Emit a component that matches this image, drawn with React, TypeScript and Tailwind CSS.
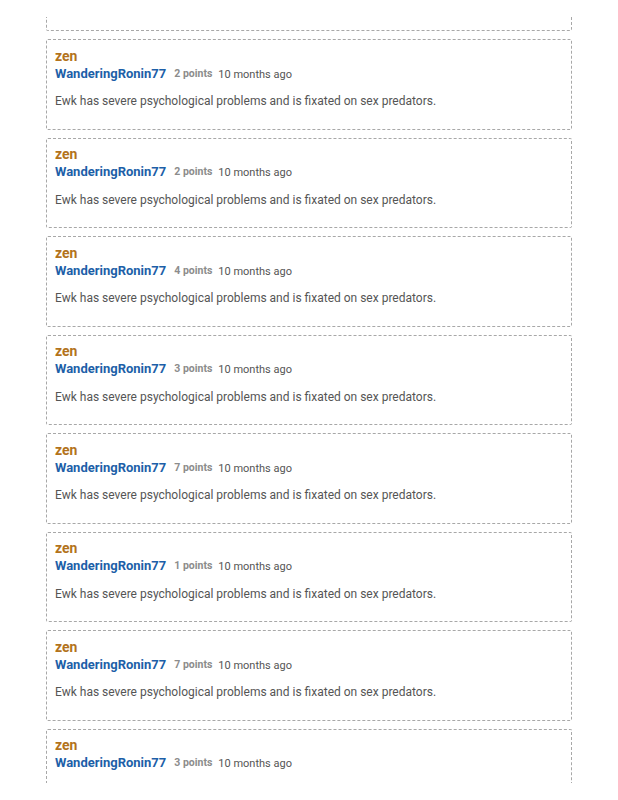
const comments = [
  { points: 2 },
  { points: 2 },
  { points: 4 },
  { points: 3 },
  { points: 7 },
  { points: 1 },
  { points: 7 },
];

function CommentHeader({ points }: { points: number }) {
  return (
    <>
      <div className="text-[14px] font-bold leading-[18px] text-[#b3731c]">zen</div>
      <div className="flex items-baseline leading-[18px]">
        <span className="text-[13px] font-bold text-[#1d5fa8]">WanderingRonin77</span>
        <span className="ml-[8px] text-[10.5px] font-bold text-[#8c8c8c] relative -top-[1px]">{points} points</span>
        <span className="ml-[6px] text-[11px] text-[#555]">10 months ago</span>
      </div>
    </>
  );
}

export default function App() {
  return (
    <div className="min-h-screen bg-white px-[46px] font-['Roboto',sans-serif]">
      {/* tail of the previous card */}
      <div className="mt-[17px] mb-2 h-[14px] rounded-b-[2px] border-x border-b border-dashed border-[#a8a8a8]" />
      {comments.map((c, i) => (
        <div
          key={i}
          className="h-[90.5px] mb-2 rounded-[2px] border border-dashed border-[#a8a8a8] px-[8px] pt-[6.5px]"
        >
          <CommentHeader points={c.points} />
          <p className="mt-[8.5px] text-[12px] leading-[18px] text-[#555]">
            Ewk has severe psychological problems and is fixated on sex predators.
          </p>
        </div>
      ))}
      {/* card cut off at the page end */}
      <div className="h-[54px] rounded-t-[2px] border-x border-t border-dashed border-[#a8a8a8] px-[8px] pt-[6.5px]">
        <CommentHeader points={3} />
      </div>
    </div>
  );
}
